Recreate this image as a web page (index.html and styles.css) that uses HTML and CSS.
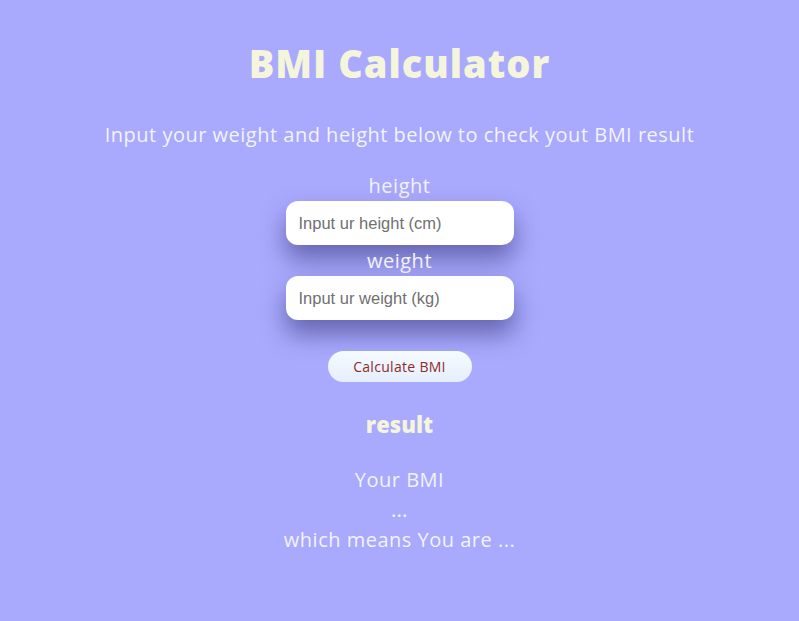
FILE: index.html
```html
<!DOCTYPE html>
<html lang="en">
<head>
<meta charset="utf-8">
<title>BMI Calculator</title>
<link rel="stylesheet" href="styles.css">
</head>
<body>
<main class="app">
  <h1 class="title">BMI Calculator</h1>
  <p class="subtitle">Input your weight and height below to check yout BMI result</p>
  <form class="form">
    <label class="label" for="h">height</label>
    <input class="field" id="h" type="text" placeholder="Input ur height (cm)">
    <label class="label" for="w">weight</label>
    <input class="field" id="w" type="text" placeholder="Input ur weight (kg)">
    <button class="btn" type="button">Calculate BMI</button>
  </form>
  <h2 class="result-title">result</h2>
  <div class="result">
    <p class="line">Your BMI</p>
    <p class="line dots">...</p>
    <p class="line">which means You are ...</p>
  </div>
</main>
</body>
</html>
```
FILE: styles.css
```css
html, body {
  margin: 0;
  padding: 0;
}
body {
  background: #a9a9fd;
  font-family: "Open Sans", "DejaVu Sans", sans-serif;
  min-height: 621px;
}
.app {
  display: flex;
  flex-direction: column;
  align-items: center;
  padding-top: 37px;
}
.title {
  margin: 0;
  font-size: 38px;
  font-weight: 800;
  color: #f5f5dc;
  line-height: 52px;
  letter-spacing: 1px;
}
.subtitle {
  margin: 33px 0 0;
  font-size: 20px;
  color: #f3f3fa;
  line-height: 26px;
  letter-spacing: 0.5px;
}
.form {
  display: flex;
  flex-direction: column;
  align-items: center;
  margin-top: 23px;
}
.label {
  font-size: 20px;
  color: #f3f3fa;
  line-height: 30px;
  letter-spacing: 0.5px;
}
.field {
  box-sizing: border-box;
  width: 228px;
  height: 44px;
  border: none;
  border-radius: 12px;
  background: #fff;
  padding: 0 13px;
  font-family: "Liberation Sans", Arial, sans-serif;
  font-size: 16.5px;
  box-shadow: 0 14px 24px rgba(45, 45, 115, 0.55);
  outline: none;
  margin: 0 0 1px;
}
.field::placeholder {
  color: #707070;
}
.btn {
  margin-top: 30px;
  width: 144px;
  height: 31px;
  border: none;
  border-radius: 16px;
  background: linear-gradient(180deg, #f6fbff 0%, #e6eefa 100%);
  color: #8b2c2c;
  font-family: "Open Sans", sans-serif;
  font-size: 14px;
  letter-spacing: 0.3px;
}
.result-title {
  margin: 27px 0 0;
  font-size: 22px;
  font-weight: 800;
  color: #f5f5dc;
  line-height: 30px;
}
.result {
  display: flex;
  flex-direction: column;
  align-items: center;
  margin-top: 26px;
}
.line {
  margin: 0;
  font-size: 20px;
  color: #f3f3fa;
  line-height: 30px;
  letter-spacing: 0.5px;
}
.dots {
  font-size: 18px;
  font-weight: 600;
}
```
